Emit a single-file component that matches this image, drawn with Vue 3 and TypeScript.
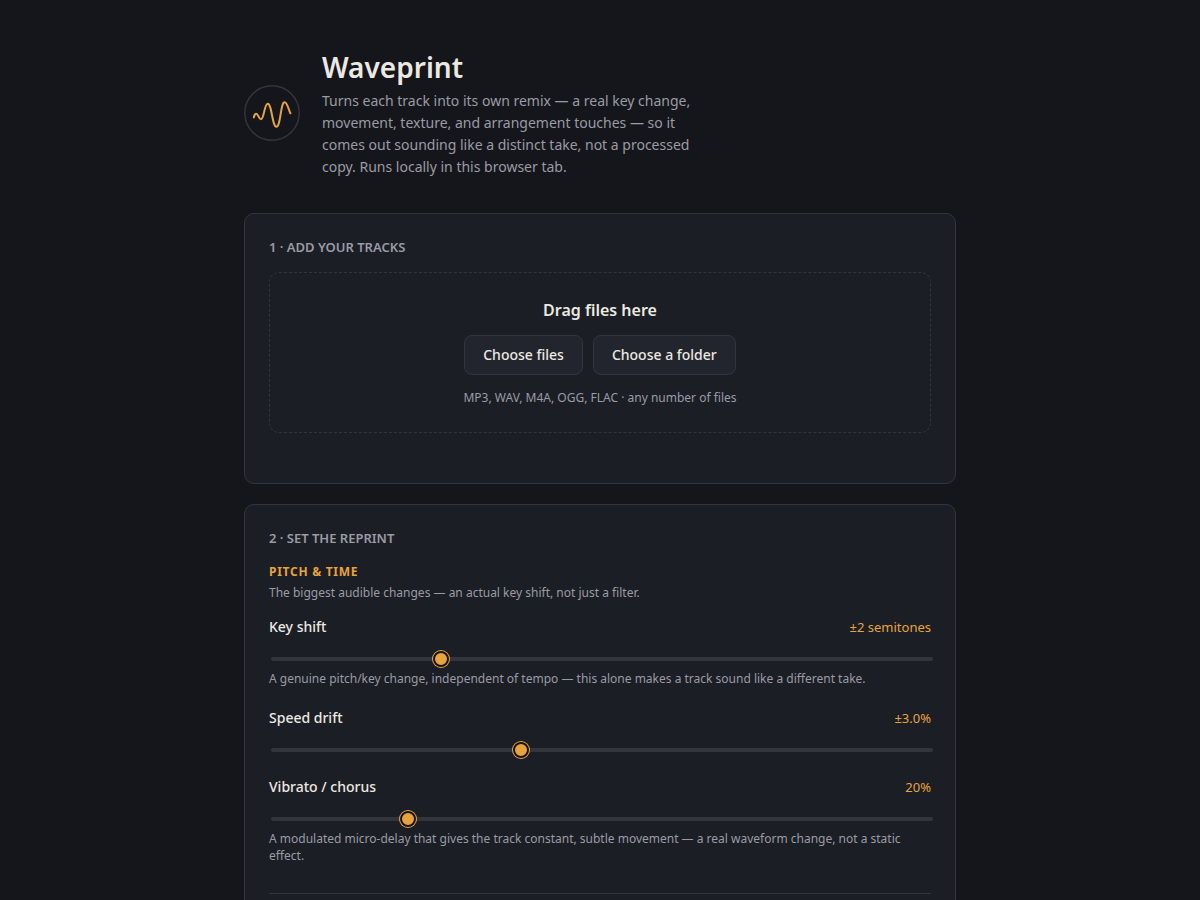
<script setup lang="ts">
import { ref } from 'vue'

interface Control {
  id: string
  label: string
  min: number
  max: number
  step: number
  value: number
  format: (value: number) => string
  hint?: string
}

const controls = ref<Control[]>([
  {
    id: 'key-shift',
    label: 'Key shift',
    min: 0,
    max: 8,
    step: 1,
    value: 2,
    format: (v) => `±${v} semitones`,
    hint: 'A genuine pitch/key change, independent of tempo — this alone makes a track sound like a different take.',
  },
  {
    id: 'speed-drift',
    label: 'Speed drift',
    min: 0,
    max: 8,
    step: 0.5,
    value: 3,
    format: (v) => `±${v.toFixed(1)}%`,
  },
  {
    id: 'vibrato',
    label: 'Vibrato / chorus',
    min: 0,
    max: 100,
    step: 1,
    value: 20,
    format: (v) => `${v}%`,
    hint: 'A modulated micro-delay that gives the track constant, subtle movement — a real waveform change, not a static effect.',
  },
])

const fileInput = ref<HTMLInputElement | null>(null)
const folderInput = ref<HTMLInputElement | null>(null)
</script>

<template>
  <main class="wrap">
    <header class="masthead">
      <svg class="logo" viewBox="0 0 56 56" aria-hidden="true">
        <circle cx="28" cy="28" r="27.2" fill="none" stroke="#33353d" stroke-width="1.5" />
        <path
          d="M9.800 32.500 C10.300 30 11 28.800 12.300 28.800 C14.200 28.800 14.800 34.300 17 34.300 C20 34.300 20.300 18.800 23.800 18.800 C27.800 18.800 28.300 41.800 32.400 41.800 C36.700 41.800 36.500 17.300 40.600 17.300 C43.200 17.300 44.300 24 46.400 28.300"
          fill="none"
          stroke="#e8a33d"
          stroke-width="2"
          stroke-linecap="round"
          stroke-linejoin="round"
        />
      </svg>
      <div class="intro">
        <h1>Waveprint</h1>
        <p>
          Turns each track into its own remix — a real key change, movement, texture, and
          arrangement touches — so it comes out sounding like a distinct take, not a processed
          copy. Runs locally in this browser tab.
        </p>
      </div>
    </header>

    <section class="card tracks">
      <h2>1 · Add your tracks</h2>
      <div class="dropzone">
        <p class="drop-title">Drag files here</p>
        <div class="actions">
          <button type="button" @click="fileInput?.click()">Choose files</button>
          <button type="button" @click="folderInput?.click()">Choose a folder</button>
        </div>
        <p class="formats">MP3, WAV, M4A, OGG, FLAC · any number of files</p>
        <input ref="fileInput" type="file" accept="audio/*" multiple hidden aria-label="Choose files" />
        <input ref="folderInput" type="file" webkitdirectory multiple hidden aria-label="Choose a folder" />
      </div>
    </section>

    <section class="card">
      <h2>2 · Set the reprint</h2>
      <div class="group">
        <h3>Pitch &amp; time</h3>
        <p class="group-note">The biggest audible changes — an actual key shift, not just a filter.</p>
        <div v-for="control in controls" :key="control.id" class="control">
          <div class="control-head">
            <label :for="control.id">{{ control.label }}</label>
            <output :for="control.id">{{ control.format(control.value) }}</output>
          </div>
          <input
            :id="control.id"
            v-model.number="control.value"
            type="range"
            :min="control.min"
            :max="control.max"
            :step="control.step"
          />
          <p v-if="control.hint" class="hint">{{ control.hint }}</p>
        </div>
      </div>
    </section>
  </main>
</template>

<style>
body {
  margin: 0;
  background: #15161b;
}
</style>

<style scoped>
.wrap {
  box-sizing: border-box;
  max-width: 760px;
  margin: 0 auto;
  padding: 48px 24px;
  color: #ece9e2;
  font-family: "Noto Sans", sans-serif;
  font-size: 14px;
}

h1, h2, h3, p {
  margin: 0;
}

.masthead {
  display: flex;
  align-items: center;
  gap: 22px;
  margin-bottom: 35px;
}

.logo {
  flex: none;
  width: 56px;
  height: 56px;
}

.intro {
  max-width: 390px;
}

h1 {
  margin-bottom: 4px;
  font-size: 28px;
  font-weight: 600;
  line-height: 38px;
}

.intro p {
  color: #9a9ba5;
  line-height: 22px;
}

.card {
  margin-bottom: 20px;
  padding: 24px;
  border: 1px solid #33353d;
  border-radius: 10px;
  background: #1c1e25;
}

.tracks {
  padding-bottom: 50px;
}

h2 {
  margin-bottom: 16px;
  color: #9a9ba5;
  font-size: 13px;
  font-weight: 600;
  line-height: 18px;
  text-transform: uppercase;
}

.dropzone {
  padding: 26px 24px;
  border: 1px dashed #33353d;
  border-radius: 10px;
  text-align: center;
}

.drop-title {
  margin-bottom: 14px;
  font-size: 16px;
  font-weight: 600;
  line-height: 22px;
}

.actions {
  display: flex;
  flex-wrap: wrap;
  justify-content: center;
  gap: 10px;
  margin-bottom: 14px;
}

button {
  padding: 9px 18px;
  border: 1px solid #33353d;
  border-radius: 8px;
  background: #23252e;
  color: inherit;
  font: inherit;
  font-weight: 500;
  line-height: 20px;
  cursor: pointer;
}

.formats,
.group-note,
.hint {
  color: #9a9ba5;
  font-size: 12px;
  line-height: 17px;
}

.group {
  padding-bottom: 29px;
  border-bottom: 1px solid #33353d;
}

h3 {
  margin-bottom: 4px;
  color: #e8a33d;
  font-size: 12px;
  font-weight: 700;
  line-height: 17px;
  letter-spacing: 0.06em;
  text-transform: uppercase;
}

.group-note {
  margin-bottom: 16px;
}

.control {
  display: flex;
  flex-direction: column;
}

.control + .control {
  margin-top: 21px;
}

.control-head {
  display: flex;
  align-items: baseline;
  justify-content: space-between;
  line-height: 20px;
}

label {
  font-weight: 500;
}

output {
  color: #e8a33d;
  font-size: 13px;
}

input[type="range"] {
  appearance: none;
  width: 100%;
  height: 4px;
  margin: 20px 2px 4px;
  border-radius: 2px;
  background: #33353d;
}

.hint {
  margin-top: 5px;
}

input[type="range"]::-webkit-slider-thumb {
  appearance: none;
  width: 16px;
  height: 16px;
  border: 2px solid #15161b;
  border-radius: 50%;
  background: #e8a33d;
  box-shadow: 0 0 0 1px #e8a33d;
  cursor: pointer;
}
</style>
